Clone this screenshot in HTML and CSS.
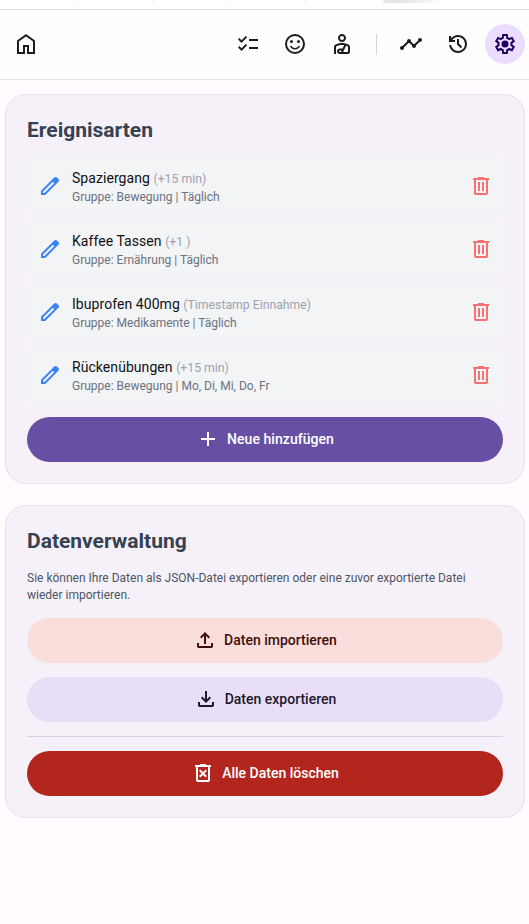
FILE: index.html
```html
<!DOCTYPE html>
<html lang="de">
<head>
<meta charset="utf-8">
<title>Einstellungen</title>
<link rel="stylesheet" href="styles.css">
</head>
<body>
<svg class="defs" aria-hidden="true">
  <symbol id="edit" viewBox="0 -960 960 960"><path d="M200-200h57l391-391-57-57-391 391v57Zm-80 80v-170l528-527q12-11 26.5-17t30.5-6q16 0 31 6t26 18l55 56q12 11 17.5 26t5.5 30q0 16-5.5 30.5T817-647L290-120H120Z"/></symbol>
  <symbol id="delete" viewBox="0 -960 960 960"><path d="M280-120q-33 0-56.5-23.5T200-200v-520h-40v-80h200v-40h240v40h200v80h-40v520q0 33-23.5 56.5T680-120H280Zm400-600H280v520h400v-520ZM360-280h80v-360h-80v360Zm160 0h80v-360h-80v360Z"/></symbol>
</svg>
<div class="strip"><i></i><i></i><i></i><i></i><b></b></div>
<header class="bar">
  <a class="nav"><svg class="icon" viewBox="0 0 24 24"><path class="line" d="M4 21V8.9L12 3.2L20 8.9V21H14V14H10V21Z"/></svg></a>
  <nav class="group">
    <a class="nav"><svg class="icon" viewBox="0 -960 960 960"><path d="M222-200 80-342l56-56 85 85 170-170 56 57-225 226Zm0-320L80-662l56-56 85 85 170-170 56 57-225 226Zm298 240v-80h360v80H520Zm0-320v-80h360v80H520Z"/></svg></a>
    <a class="nav"><svg class="icon" viewBox="0 0 24 24"><circle class="line" cx="12" cy="12" r="9"/><circle cx="8.5" cy="9.5" r="1.5"/><circle cx="15.5" cy="9.5" r="1.5"/><path d="M12 17.5c2.33 0 4.32-1.45 5.12-3.5h-1.67c-.69 1.19-1.97 2-3.45 2s-2.75-.81-3.45-2H6.88c.8 2.05 2.79 3.5 5.12 3.5z"/></svg></a>
    <a class="nav"><svg class="icon" viewBox="0 0 24 24"><path d="M12 10c2.21 0 4-1.79 4-4s-1.79-4-4-4-4 1.79-4 4 1.79 4 4 4zm0-6c1.1 0 2 .9 2 2s-.9 2-2 2-2-.9-2-2 .9-2 2-2zm6.39 8.56C16.71 11.7 14.53 11 12 11s-4.71.7-6.39 1.56C4.61 13.07 4 14.1 4 15.22V22h2v-6.78c0-.38.2-.72.52-.88C7.71 13.73 9.63 13 12 13c.76 0 1.47.07 2.13.2l-1.55 3.3H9.75C8.23 16.5 7 17.73 7 19.25S8.23 22 9.75 22H18c1.1 0 2-.9 2-2v-4.78c0-1.12-.61-2.15-1.61-2.66zM10.94 20H9.75c-.41 0-.75-.34-.75-.75s.34-.75.75-.75h1.89L10.94 20zM18 20h-4.85l2.94-6.27c.54.2 1.01.41 1.4.61.31.16.51.5.51.88V20z"/></svg></a>
    <span class="divider"></span>
    <a class="nav"><svg class="icon" viewBox="0 0 24 24"><path d="M23 8c0 1.1-.9 2-2 2-.18 0-.35-.02-.51-.07l-3.56 3.55c.05.16.07.34.07.52 0 1.1-.9 2-2 2s-2-.9-2-2c0-.18.02-.36.07-.52l-2.55-2.55c-.16.05-.34.07-.52.07s-.36-.02-.52-.07l-4.55 4.56c.05.16.07.33.07.51 0 1.1-.9 2-2 2s-2-.9-2-2 .9-2 2-2c.18 0 .35.02.51.07l4.56-4.55C8.02 9.36 8 9.18 8 9c0-1.1.9-2 2-2s2 .9 2 2c0 .18-.02.36-.07.52l2.55 2.55c.16-.05.34-.07.52-.07s.36.02.52.07l3.55-3.56C19.02 8.35 19 8.18 19 8c0-1.1.9-2 2-2s2 .9 2 2z"/></svg></a>
    <a class="nav"><svg class="icon" viewBox="0 -960 960 960"><path d="M480-120q-138 0-240.5-91.5T122-440h82q14 104 92.5 172T480-200q117 0 198.5-81.5T760-480q0-117-81.5-198.5T480-760q-69 0-129 32t-101 88h110v80H120v-240h80v94q51-64 124.5-99T480-840q75 0 140.5 28.5t114 77q48.5 48.5 77 114T840-480q0 75-28.5 140.5t-77 114q-48.5 48.5-114 77T480-120Zm112-192L440-464v-216h80v184l128 128-56 56Z"/></svg></a>
    <a class="nav active"><svg class="icon" viewBox="0 -960 960 960"><path d="m370-80-16-128q-13-5-24.5-12T307-235l-119 50L78-375l103-78q-1-7-1-13.5v-27q0-6.5 1-13.5L78-585l110-190 119 50q11-8 23-15t24-12l16-128h220l16 128q13 5 24.5 12t22.5 15l119-50 110 190-103 78q1 7 1 13.5v27q0 6.5-2 13.5l103 78-110 190-118-50q-11 8-23 15t-24 12L590-80H370Zm70-80h79l14-106q31-8 57.5-23.5T639-327l99 41 39-68-86-65q5-14 7-29.5t2-31.5q0-16-2-31.5t-7-29.5l86-65-39-68-99 42q-22-23-48.5-38.5T533-694l-13-106h-79l-14 106q-31 8-57.5 23.5T321-633l-99-41-39 68 86 64q-5 15-7 30t-2 32q0 16 2 31t7 30l-86 65 39 68 99-42q22 23 48.5 38.5T427-266l13 106Z"/><circle cx="480" cy="-480" r="140"/></svg></a>
  </nav>
</header>
<main class="page">
  <section class="card">
    <h2>Ereignisarten</h2>
    <ul class="list">
      <li class="row"><svg class="icon blue"><use href="#edit"/></svg><div class="info"><div class="name">Spaziergang <small>(+15 min)</small></div><div class="meta">Gruppe: Bewegung | Täglich</div></div><svg class="icon red"><use href="#delete"/></svg></li>
      <li class="row"><svg class="icon blue"><use href="#edit"/></svg><div class="info"><div class="name">Kaffee Tassen <small>(+1 )</small></div><div class="meta">Gruppe: Ernährung | Täglich</div></div><svg class="icon red"><use href="#delete"/></svg></li>
      <li class="row"><svg class="icon blue"><use href="#edit"/></svg><div class="info"><div class="name">Ibuprofen 400mg <small>(Timestamp Einnahme)</small></div><div class="meta">Gruppe: Medikamente | Täglich</div></div><svg class="icon red"><use href="#delete"/></svg></li>
      <li class="row"><svg class="icon blue"><use href="#edit"/></svg><div class="info"><div class="name">Rückenübungen <small>(+15 min)</small></div><div class="meta">Gruppe: Bewegung | Mo, Di, Mi, Do, Fr</div></div><svg class="icon red"><use href="#delete"/></svg></li>
    </ul>
    <button class="btn primary"><svg class="icon" viewBox="0 -960 960 960"><path d="M440-440H200v-80h240v-240h80v240h240v80H520v240h-80v-240Z"/></svg>Neue hinzufügen</button>
  </section>
  <section class="card">
    <h2>Datenverwaltung</h2>
    <p>Sie können Ihre Daten als JSON-Datei exportieren oder eine zuvor exportierte Datei wieder importieren.</p>
    <button class="btn import"><svg class="icon" viewBox="0 -960 960 960"><path d="M440-320v-326L336-542l-56-58 200-200 200 200-56 58-104-104v326h-80ZM240-160q-33 0-56.5-23.5T160-240v-120h80v120h480v-120h80v120q0 33-23.5 56.5T720-160H240Z"/></svg>Daten importieren</button>
    <button class="btn export"><svg class="icon" viewBox="0 -960 960 960"><path d="M480-320 280-520l56-58 104 104v-326h80v326l104-104 56 58-200 200ZM240-160q-33 0-56.5-23.5T160-240v-120h80v120h480v-120h80v120q0 33-23.5 56.5T720-160H240Z"/></svg>Daten exportieren</button>
    <hr>
    <button class="btn danger"><svg class="icon" viewBox="0 -960 960 960"><path d="m376-300 104-104 104 104 56-56-104-104 104-104-56-56-104 104-104-104-56 56 104 104-104 104 56 56Zm-96 180q-33 0-56.5-23.5T200-200v-520h-40v-80h200v-40h240v40h200v80h-40v520q0 33-23.5 56.5T680-120H280Zm400-600H280v520h400v-520Z"/></svg>Alle Daten löschen</button>
  </section>
</main>
</body>
</html>
```
FILE: styles.css
```css
* { box-sizing: border-box; margin: 0; padding: 0; }
html { font-size: 14px; }
body { font-family: Roboto, sans-serif; background: #fffbff; color: #1c1b1f; line-height: 1.5; min-height: 924px; }
.defs { display: none; }
.icon { width: 24px; height: 24px; flex: none; display: block; fill: currentColor; }
.line { fill: none; stroke: currentColor; stroke-width: 2; }

.strip { display: flex; height: 10px; background: #fff; border-bottom: 1px solid #e0e0e0; }
.strip i { width: 77px; height: 1px; border-right: 1px solid #ddd; }
.strip i + i { width: 76px; }
.strip b { width: 62px; height: 3px; margin-left: 78px; border-bottom-left-radius: 4px; background: linear-gradient(90deg, #e6e6e6 30%, #fff); }

.bar { display: flex; justify-content: space-between; align-items: center; height: 70px; padding: 0 4px 1px 6px; background: #fefefe; border-bottom: 1px solid #e5e5e5; }
.group { display: flex; align-items: center; gap: 7px; }
.nav { display: flex; align-items: center; justify-content: center; width: 40px; height: 40px; border-radius: 50%; }
.active { background: #eaddff; color: #21005d; }
.divider { width: 1px; height: 21px; margin: 0 7px; background: #d1d5db; }

.page { display: flex; flex-direction: column; gap: 21px; padding: 14px 4px 14px 5px; }
.card { padding: 21px; border: 1px solid #e6e0ec; border-radius: 21px; background: #f6f1f9; }
h2 { font-size: 21px; line-height: 28px; font-weight: 700; color: #374151; margin-bottom: 14px; }
.list { display: flex; flex-direction: column; gap: 7px; list-style: none; margin-bottom: 14px; }
.row { display: flex; align-items: center; height: 56px; padding: 0 10px 0 11px; border-radius: 7px; background: #f3f4f6; }
.info { flex: 1; margin-left: 10px; padding-top: 2px; }
.name { line-height: 21px; letter-spacing: 0.06px; color: #111; }
small { font-size: 12.25px; line-height: 1; letter-spacing: 0; color: #9ca3af; }
.meta { font-size: 12px; line-height: 17px; color: #6b7280; }
.blue { color: #3b82f6; }
.red { color: #f87171; }
p { font-size: 12px; line-height: 17px; padding-top: 1px; color: #4b5563; margin-bottom: 14px; }
.btn { display: flex; align-items: center; justify-content: center; gap: 7px; width: 100%; height: 45px; border: 0; border-radius: 23px; font: 500 14px/21px Roboto, sans-serif; }
.btn .icon { margin-bottom: 1px; }
.btn + .btn { margin-top: 14px; }
.primary { background: #6750a4; color: #fff; letter-spacing: 0.05px; }
.import { background: #f9dedc; color: #410e0b; }
.export { background: #e8def8; color: #1d192b; }
.danger { background: #b3261e; color: #fff; }
hr { border: 0; border-top: 1px solid #d1d5db; margin: 14px 0; }
```
